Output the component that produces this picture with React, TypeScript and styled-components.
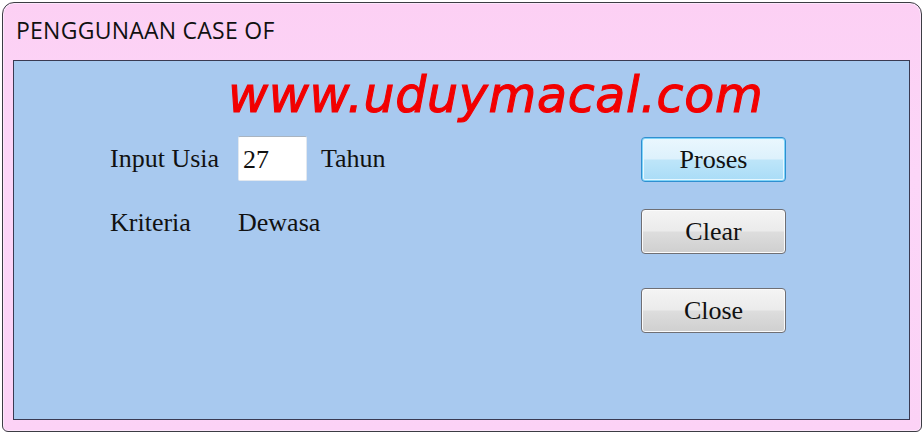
import React from "react";
import styled, { createGlobalStyle } from "styled-components";

const Global = createGlobalStyle`
  html, body { margin: 0; padding: 0; background: #ffffff; }
  body { width: 924px; height: 434px; overflow: hidden; }
`;

const Window = styled.div`
  box-sizing: border-box;
  margin: 2px 0 0 2px;
  width: 920px;
  height: 430px;
  border: 1px solid #3c3c44;
  border-radius: 12px 12px 6px 6px;
  background: linear-gradient(180deg, #fcd0f4 0%, #fdd6f8 40%, #fcd2f6 100%);
  box-shadow: inset 0 0 0 1px #fbe6fa;
  display: flex;
  flex-direction: column;
  padding: 0 11px 11px 10px;
`;

const TitleBar = styled.div`
  height: 57px;
  display: flex;
  align-items: center;
  padding-left: 3px;
  font-family: "Open Sans", "Noto Sans", sans-serif;
  font-size: 23px;
  letter-spacing: 0.25px;
  color: #111;
  box-sizing: border-box;
  padding-bottom: 3px;
`;

const Client = styled.div`
  flex: 1;
  box-sizing: border-box;
  border: 1px solid #3a3a52;
  background: #a8c9ef;
  display: flex;
  flex-direction: column;
`;

const Watermark = styled.div`
  margin: 8px 0 0 214px;
  font-family: "DejaVu Sans", Verdana, sans-serif;
  font-style: italic;
  font-size: 49px;
  line-height: 54px;
  letter-spacing: 0.7px;
  color: #f20000;
  -webkit-text-stroke: 1.1px #f20000;
`;

const Body = styled.div`
  display: flex;
  margin-top: 13px;
  padding-left: 96px;
`;

const Form = styled.div`
  width: 530px;
  display: flex;
  flex-direction: column;
  gap: 27px;
`;

const Row = styled.div`
  display: flex;
  align-items: center;
  min-height: 30px;
`;

const Label = styled.span<{ $width?: number }>`
  font-family: "Liberation Serif", "Times New Roman", serif;
  font-size: 26px;
  color: #111;
  width: ${(p) => (p.$width ? `${p.$width}px` : "auto")};
  flex-shrink: 0;
`;

const Input = styled.div`
  box-sizing: border-box;
  width: 69px;
  height: 45px;
  background: #ffffff;
  border: 1px solid #e2e8ef;
  border-top-color: #a9b4c0;
  border-radius: 2px;
  padding: 3px 0 0 4px;
  margin-right: 14px;
  font-family: "Liberation Serif", "Times New Roman", serif;
  font-size: 26px;
  line-height: 30px;
  color: #111;
  display: flex;
  align-items: center;
`;

const Buttons = styled.div`
  display: flex;
  flex-direction: column;
  gap: 27px;
  margin-left: 1px;
  padding-top: 1px;
`;

const Button = styled.button<{ $focused?: boolean; $spaced?: boolean }>`
  box-sizing: border-box;
  width: 145px;
  height: 45px;
  margin-top: ${(p) => (p.$spaced ? "7px" : "0")};
  border-radius: 4px;
  border: 1px solid ${(p) => (p.$focused ? "#2f8fd0" : "#6f6f74")};
  background: ${(p) =>
    p.$focused
      ? "linear-gradient(180deg, #eaf7fe 0%, #ddf1fc 48%, #bde5f9 52%, #a9dcf7 100%)"
      : "linear-gradient(180deg, #f4f4f4 0%, #ebebeb 48%, #dddddd 52%, #cfcfcf 100%)"};
  box-shadow: ${(p) =>
    p.$focused
      ? "inset 0 0 0 1px #7fd4f8, inset 0 0 0 2px #e6f7ff"
      : "inset 0 0 0 1px #fbfbfb"};
  font-family: "Liberation Serif", "Times New Roman", serif;
  font-size: 26px;
  color: #111;
  padding: 0;
  cursor: default;
`;

export default function App() {
  return (
    <>
      <Global />
      <Window>
        <TitleBar>PENGGUNAAN CASE OF</TitleBar>
        <Client>
          <Watermark>www.uduymacal.com</Watermark>
          <Body>
            <Form>
              <Row>
                <Label $width={128}>Input Usia</Label>
                <Input>27</Input>
                <Label>Tahun</Label>
              </Row>
              <Row>
                <Label $width={128}>Kriteria</Label>
                <Label>Dewasa</Label>
              </Row>
            </Form>
            <Buttons>
              <Button $focused>Proses</Button>
              <Button>Clear</Button>
              <Button $spaced>Close</Button>
            </Buttons>
          </Body>
        </Client>
      </Window>
    </>
  );
}
